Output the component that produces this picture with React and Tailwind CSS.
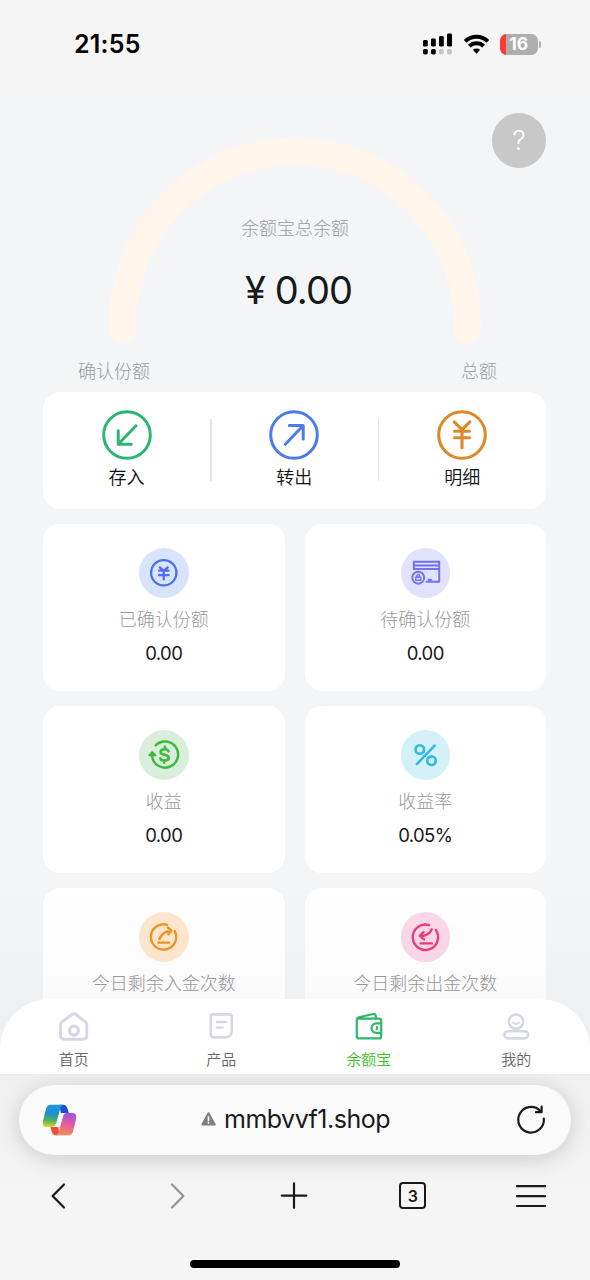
const FONT = "font-['Inter','Noto_Sans_CJK_SC',sans-serif]";

function DepositIcon() {
  return (
    <svg className="size-[50px]" viewBox="0 0 50 50" fill="none" stroke="#2bb673" strokeWidth="3" strokeLinecap="round" strokeLinejoin="round">
      <circle cx="25" cy="25" r="23.3" />
      <path d="M34 15.8 16.4 34M16.2 20.7V34.2H29.3" />
    </svg>
  );
}

function TransferIcon() {
  return (
    <svg className="size-[50px]" viewBox="0 0 50 50" fill="none" stroke="#4a7bf0" strokeWidth="3" strokeLinecap="round" strokeLinejoin="round">
      <circle cx="25" cy="25" r="23.3" />
      <path d="M16.3 34.2 34 15.8M20.3 15.4H34.2V29" />
    </svg>
  );
}

function DetailIcon() {
  return (
    <svg className="size-[50px]" viewBox="0 0 50 50" fill="none" stroke="#dc8a28" strokeWidth="3.1" strokeLinecap="round" strokeLinejoin="round">
      <circle cx="25" cy="25" r="23.3" />
      <path d="M17.2 11.8 25 19.6 32.9 11.8M25 19.6V37.8M17.5 21.2H32.5M17.5 27.7H32.5" />
    </svg>
  );
}

const YenGlyph = () => (
  <g stroke="#4a6ff2" strokeWidth="2.3">
    <circle r="12.8" />
    <path d="M-4-5.4 0-1.8 4-5.4M0-1.8V6.8M-4.8-2.2H5M-4.8 2.4H5" />
  </g>
);

const CardGlyph = () => (
  <g stroke="#7271f3" strokeWidth="2">
    <path d="M-12-3.7V-11H13.6V9H.8M-12-7.3H13.6M-12-3.7H13.6M3 7H5.2" />
    <circle cx="-7.6" cy="5" r="6" />
    <path strokeWidth="1.4" d="M-10.2 4.6H-5V7.6H-10.2ZM-9 4.4V3.2A1.4 1.4 0 0 1-6.2 3.2V4.4" />
  </g>
);

const IncomeGlyph = () => (
  <g stroke="#3abb3e" strokeWidth="2.5">
    <path d="M-8.2-9.4A13.2 13.2 0 1 1-11.8 1.6" />
    <path fill="#3abb3e" strokeWidth="1.6" d="M-14.8.6-11.6-3-8.2.6Z" />
    <path strokeWidth="2.6" d="M4.8-3.4C4.2-5.2 2.8-5.6 1-5.6-1.6-5.6-3.2-4.6-3.2-2.9-3.2-.8-1.2-.3 1 .1 3.6.6 5 1.4 5 3.1 5 5.1 3.6 5.9 1 5.9-1.4 5.9-3 5.2-3.4 3.6M1.2-8V-5.6M.4 6V8" />
  </g>
);

const PercentGlyph = () => (
  <g stroke="#31bbe2" strokeWidth="2.7">
    <path d="M9-9.2-9 9.4" />
    <circle cx="-6" cy="-5.3" r="4.3" />
    <circle cx="5.8" cy="6" r="4.3" />
  </g>
);

const DepositCountGlyph = () => (
  <g stroke="#ee951f" strokeWidth="2.4">
    <path d="M3.4-12.1A12.8 12.8 0 1 0 11-6" />
    <path d="M-4.4 2.2C-2.6-1.8 1.4-5.6 7-6M4-9.4 7.8-6.2 4.6-2.4M-5.6 5.9H5.3" />
  </g>
);

const WithdrawCountGlyph = () => (
  <g stroke="#ea3b7e" strokeWidth="2.4">
    <path d="M3.3-11.8A12.8 12.8 0 1 0 10.2-6.8" />
    <path d="M6-7.4C4.6-3.4 0-.4-5.4-.7M-2.2-4.6-6-.8-1.8 2.7M-5.2 6.7H6.2" />
  </g>
);

const actions = [
  { label: "存入", Icon: DepositIcon },
  { label: "转出", Icon: TransferIcon },
  { label: "明细", Icon: DetailIcon },
];

const stats = [
  { label: "已确认份额", value: "0.00", tint: "bg-[#d9e3fd]", Glyph: YenGlyph },
  { label: "待确认份额", value: "0.00", tint: "bg-[#e1e2fd]", Glyph: CardGlyph },
  { label: "收益", value: "0.00", tint: "bg-[#daeedb]", Glyph: IncomeGlyph },
  { label: "收益率", value: "0.05%", tint: "bg-[#d4f1fa]", Glyph: PercentGlyph },
  { label: "今日剩余入金次数", value: "0", tint: "bg-[#fde8cf]", Glyph: DepositCountGlyph },
  { label: "今日剩余出金次数", value: "0", tint: "bg-[#fbd8e7]", Glyph: WithdrawCountGlyph },
];

const tabs = [
  {
    label: "首页",
    icon: (
      <g strokeWidth="2.9">
        <path d="M3.6 12.2 13.2 4.9C14.8 3.7 17 3.7 18.6 4.9L27.4 12.2C28.4 13 28.8 14 28.8 15.2V25.6C28.8 27.8 27.4 29.2 25.2 29.2H6C3.8 29.2 2.6 27.8 2.6 25.6V15.2C2.6 14 2.8 13 3.6 12.2Z" />
        <circle cx="16" cy="20.6" r="4.5" strokeWidth="3.2" />
      </g>
    ),
  },
  {
    label: "产品",
    icon: (
      <g strokeWidth="2.6">
        <path d="M8.6 4.4H24C25.8 4.4 26.8 5.4 26.8 7.2V20.6C26.8 24.6 24.4 27.4 20.8 27.4H8.6C6.8 27.4 5.8 26.4 5.8 24.6V7.2C5.8 5.4 6.8 4.4 8.6 4.4Z" />
        <path strokeWidth="2.3" d="M11.6 12H21.2M11.6 17.6H17.8" />
      </g>
    ),
  },
  {
    label: "余额宝",
    active: true,
    icon: (
      <g strokeWidth="2.2">
        <path d="M4.6 8.6H26.2C27.4 8.6 28.2 9.4 28.2 10.6V26.4C28.2 27.6 27.4 28.4 26.2 28.4H6C4.6 28.4 3.8 27.6 3.8 26.4V9.4C3.8 8 4.6 7.6 6 7.2L20.2 4C21.4 3.7 22.2 4.2 22.6 5.4L23.2 8.4" />
        <path d="M28.2 13.4H23.2A4.7 4.7 0 0 0 23.2 22.8H28.2M23.8 16.8V19.2" />
      </g>
    ),
  },
  {
    label: "我的",
    icon: (
      <g strokeWidth="2.6">
        <circle cx="16" cy="11.7" r="7.2" />
        <rect x="4.4" y="21.2" width="23.6" height="7.2" rx="3.4" />
        <path strokeWidth="2" d="M13.2 12.6C14.6 14.4 17.4 14.4 18.8 12.6" />
      </g>
    ),
  },
];

function StatusBar() {
  return (
    <div className="flex h-[88px] shrink-0 items-center justify-between bg-[#f5f5f5] pr-[49px] pl-[74px]">
      <span className="pt-px text-[25px] leading-none font-semibold tracking-[0.2px] text-black">21:55</span>
      <div className="flex items-center gap-[11px]">
        <svg className="h-[22px] w-[30px]" viewBox="0 0 30 22">
          <rect x="0" y="7" width="4.8" height="6.6" rx="1.4" />
          <rect x="8" y="5.6" width="4.8" height="8" rx="1.4" />
          <rect x="16" y="3" width="4.8" height="10.6" rx="1.4" />
          <rect x="24" y="0.4" width="5" height="13.2" rx="1.4" />
          <rect x="0" y="16" width="4.8" height="5.4" rx="1.6" />
          <rect x="8" y="16" width="4.8" height="5.4" rx="1.6" />
          <rect x="16" y="16" width="4.8" height="5.4" rx="1.6" fill="#c4c4c4" />
          <rect x="24" y="16" width="4.8" height="5.4" rx="1.6" fill="#c4c4c4" />
        </svg>
        <svg className="h-[20px] w-[25px]" viewBox="0 0 25 20" fill="none" stroke="#000" strokeWidth="3.9">
          <path d="M1.2 7.4A16.2 16.2 0 0 1 23.8 7.4" />
          <path d="M5.3 12.2A10.3 10.3 0 0 1 19.7 12.2" />
          <path d="M8.9 15.8A5.3 5.3 0 0 1 16.1 15.8L12.5 19.8Z" fill="#000" stroke="none" />
        </svg>
        <div className="flex items-center gap-[1.5px]">
          <div className="flex h-[21px] w-[37.5px] items-center justify-center overflow-hidden rounded-[6.5px] bg-linear-to-r from-[#fb3b33] from-[16%] to-[#aeaeae] to-[16%] pt-px text-[17.5px] font-bold text-white">
            16
          </div>
          <div className="h-[7px] w-[2px] rounded-r-full bg-[#b0b0b0]" />
        </div>
      </div>
    </div>
  );
}

function Balance() {
  return (
    <header className="relative flex h-[304px] flex-col items-center pt-[50px]">
      <button type="button" className="absolute top-[25px] right-[44px] flex h-[55px] w-[54px] items-center justify-center rounded-full bg-[#c8c8c8] pt-[2px] text-[27px] font-[350] text-white">
        ?
      </button>
      <div className="relative h-[206px] w-[372px]">
        <svg className="h-full w-full" viewBox="0 0 372 206" fill="none">
          <path d="M13.6 191.5A172.5 172.5 0 1 1 358.4 191.5" stroke="#fff5ea" strokeWidth="27" strokeLinecap="round" />
        </svg>
        <div className="absolute inset-x-0 top-[79px] flex flex-col items-center">
          <p className="text-[18px] leading-6 font-light text-[#9a9b9d]">余额宝总余额</p>
          <p className="mt-[25px] ml-[7px] text-[38px] leading-[48px] tracking-[-0.9px] text-[#18191b]">¥ 0.00</p>
        </div>
      </div>
      <div className="mt-[16px] flex w-full justify-between pr-[93px] pl-[78px] text-[18px] leading-6 font-light text-[#9a9b9d]">
        <span>确认份额</span>
        <span>总额</span>
      </div>
    </header>
  );
}

function StatCard({ label, value, tint, Glyph }) {
  return (
    <div className="flex h-[166.5px] flex-col items-center rounded-[17px] bg-white pt-[24px]">
      <div className={`size-[49.5px] rounded-full ${tint}`}>
        <svg className="h-full w-full" viewBox="-25 -25 50 50" fill="none" strokeLinecap="round" strokeLinejoin="round">
          <Glyph />
        </svg>
      </div>
      <p className="mt-[10px] text-[18px] leading-6 font-light text-[#98999b]">{label}</p>
      <p className="mt-[9px] text-[18.5px] leading-6 tracking-[-0.6px] text-[#18191b]">{value}</p>
    </div>
  );
}

function TabBar() {
  return (
    <nav className="absolute inset-x-0 bottom-0 grid h-[75px] grid-cols-4 rounded-t-[50px] bg-white">
      {tabs.map((tab) => (
        <div key={tab.label} className="flex flex-col items-center pt-[11px]">
          <svg className={tab.active ? "size-8 text-[#2fb866]" : "size-8 text-[#d6d6e4]"} viewBox="0 0 32 32" fill="none" stroke="currentColor" strokeLinecap="round" strokeLinejoin="round">
            {tab.icon}
          </svg>
          <span className={tab.active ? "mt-2 text-[15px] leading-5 font-[350] text-[#3cc022]" : "mt-2 text-[15px] leading-5 font-[350] text-[#66676a]"}>
            {tab.label}
          </span>
        </div>
      ))}
    </nav>
  );
}

function CopilotLogo() {
  return (
    <svg className="h-[32px] w-[35px]" viewBox="126 340 103 95">
      <defs>
        <linearGradient id="cool" x1="0.4" y1="0" x2="0.3" y2="1">
          <stop offset="0" stopColor="#1897e6" />
          <stop offset="0.4" stopColor="#1f8fc9" />
          <stop offset="0.72" stopColor="#4fb560" />
          <stop offset="1" stopColor="#e6d51c" />
        </linearGradient>
        <linearGradient id="warm" x1="0.7" y1="0" x2="0.5" y2="1">
          <stop offset="0" stopColor="#9a54e8" />
          <stop offset="0.5" stopColor="#e65aa0" />
          <stop offset="1" stopColor="#fb8a55" />
        </linearGradient>
      </defs>
      <path fill="#1d4fd0" d="M176 342H188C198 342 201 350 205 367H182Z" />
      <path fill="#ee4f3c" d="M178 433H167C157 433 154 424 151 408H174Z" />
      <path fill="url(#cool)" d="M152 342H190C182 344 180 352 177 364L168 396C165 405 162 408 154 408H140C128 408 126 400 129 388L137 356C140 346 144 342 152 342Z" />
      <path fill="url(#warm)" d="M203 433H165C173 431 175 424 178 412L187 380C190 370 193 367 201 367H215C227 367 229 376 226 388L218 420C215 430 211 433 203 433Z" />
      <path fill="#fff" d="M193 367C189 370 188 375 186 382L178 408H161C166 406 168 400 170 394L175 377C177 370 180 367 187 367Z" />
    </svg>
  );
}

function BrowserBar() {
  return (
    <footer className="flex h-[206px] shrink-0 flex-col items-center overflow-hidden bg-linear-to-b from-[#efefef] to-[#f5f5f5] to-60% pt-[10.5px]">
      <div className="flex h-[70px] w-[552px] items-center justify-between rounded-full bg-[#fafafa] pr-[24px] pl-[23px] shadow-[0_4px_22px_rgba(0,0,0,0.16)]">
        <CopilotLogo />
        <div className="flex items-center gap-[8px] pr-px pb-[2px]">
          <svg className="h-[14px] w-[15px]" viewBox="0 0 15 14">
            <path d="M7.5 1.3 13.7 12.6H1.3Z" fill="#7f7f7f" stroke="#7f7f7f" strokeWidth="2" strokeLinejoin="round" />
            <path d="M7.5 5V8.2M7.5 10.4V10.8" stroke="#fafafa" strokeWidth="1.7" strokeLinecap="round" />
          </svg>
          <span className="text-[25px] leading-8 tracking-[-0.5px] text-[#1a1a1a]">mmbvvf1.shop</span>
        </div>
        <svg className="mb-[2px] size-8" viewBox="0 0 32 32" fill="none" stroke="#1a1a1a" strokeWidth="2.2" strokeLinecap="round" strokeLinejoin="round">
          <path d="M28.8 15.6A12.8 12.8 0 1 1 25 7.6" />
          <path d="M26.6 3.6V9.2H21" />
        </svg>
      </div>
      <div className="mt-[25px] flex w-full items-center justify-between pr-[43px] pl-[42px]">
        <svg className="size-8" viewBox="0 0 32 32" fill="none" stroke="#1a1a1a" strokeWidth="2.2" strokeLinecap="round" strokeLinejoin="round">
          <path d="M22 4.5 10.6 16 22 27.5" />
        </svg>
        <svg className="size-8" viewBox="0 0 32 32" fill="none" stroke="#929292" strokeWidth="2.2" strokeLinecap="round" strokeLinejoin="round">
          <path d="M12 4.5 23.4 16 12 27.5" />
        </svg>
        <svg className="size-8" viewBox="0 0 32 32" stroke="#1a1a1a" strokeWidth="2.2" strokeLinecap="round">
          <path d="M15 3.4V27.8M2.8 15.6H27.4" />
        </svg>
        <div className="flex size-8 items-center justify-center">
          <span className="flex h-[27px] w-[27px] items-center justify-center rounded-[4px] border-2 border-[#1a1a1a] text-[16px] font-semibold text-[#1a1a1a]">3</span>
        </div>
        <svg className="size-8" viewBox="0 0 32 32" stroke="#1a1a1a" strokeWidth="2.2" strokeLinecap="round">
          <path d="M2 6.2H30M2 16.2H30M2 26H30" />
        </svg>
      </div>
      <div className="mt-[48.5px] h-2 w-[210px] rounded-full bg-black" />
    </footer>
  );
}

export default function App() {
  return (
    <div className={`flex h-[1280px] w-[590px] flex-col overflow-hidden bg-[#f3f5f7] ${FONT}`}>
      <StatusBar />
      <main className="relative h-[986px] shrink-0 overflow-hidden">
        <Balance />
        <section className="mr-[44px] ml-[43px] grid h-[117px] grid-cols-3 rounded-[17px] bg-white">
          {actions.map(({ label, Icon }, i) => (
            <div key={label} className="flex items-center">
              <div className="flex flex-1 flex-col items-center pt-[2px]">
                <Icon />
                <span className="mt-[6px] mb-[4px] text-[18px] leading-6 font-[350] text-[#101112]">{label}</span>
              </div>
              {i < 2 ? <span className="mb-[2px] -mr-px h-[62px] w-[1.5px] bg-[#e3e3e5]" /> : null}
            </div>
          ))}
        </section>
        <section className="mt-[15px] mr-[44px] ml-[43px] grid grid-cols-2 gap-x-[20px] gap-y-[15.5px]">
          {stats.map((item) => (
            <StatCard key={item.label} {...item} />
          ))}
        </section>
        {/* soft shade under the floating tab bar */}
        <div className="absolute inset-x-0 bottom-0 h-[190px] bg-linear-to-b from-transparent to-black/[0.03]" />
        <TabBar />
      </main>
      <BrowserBar />
    </div>
  );
}
